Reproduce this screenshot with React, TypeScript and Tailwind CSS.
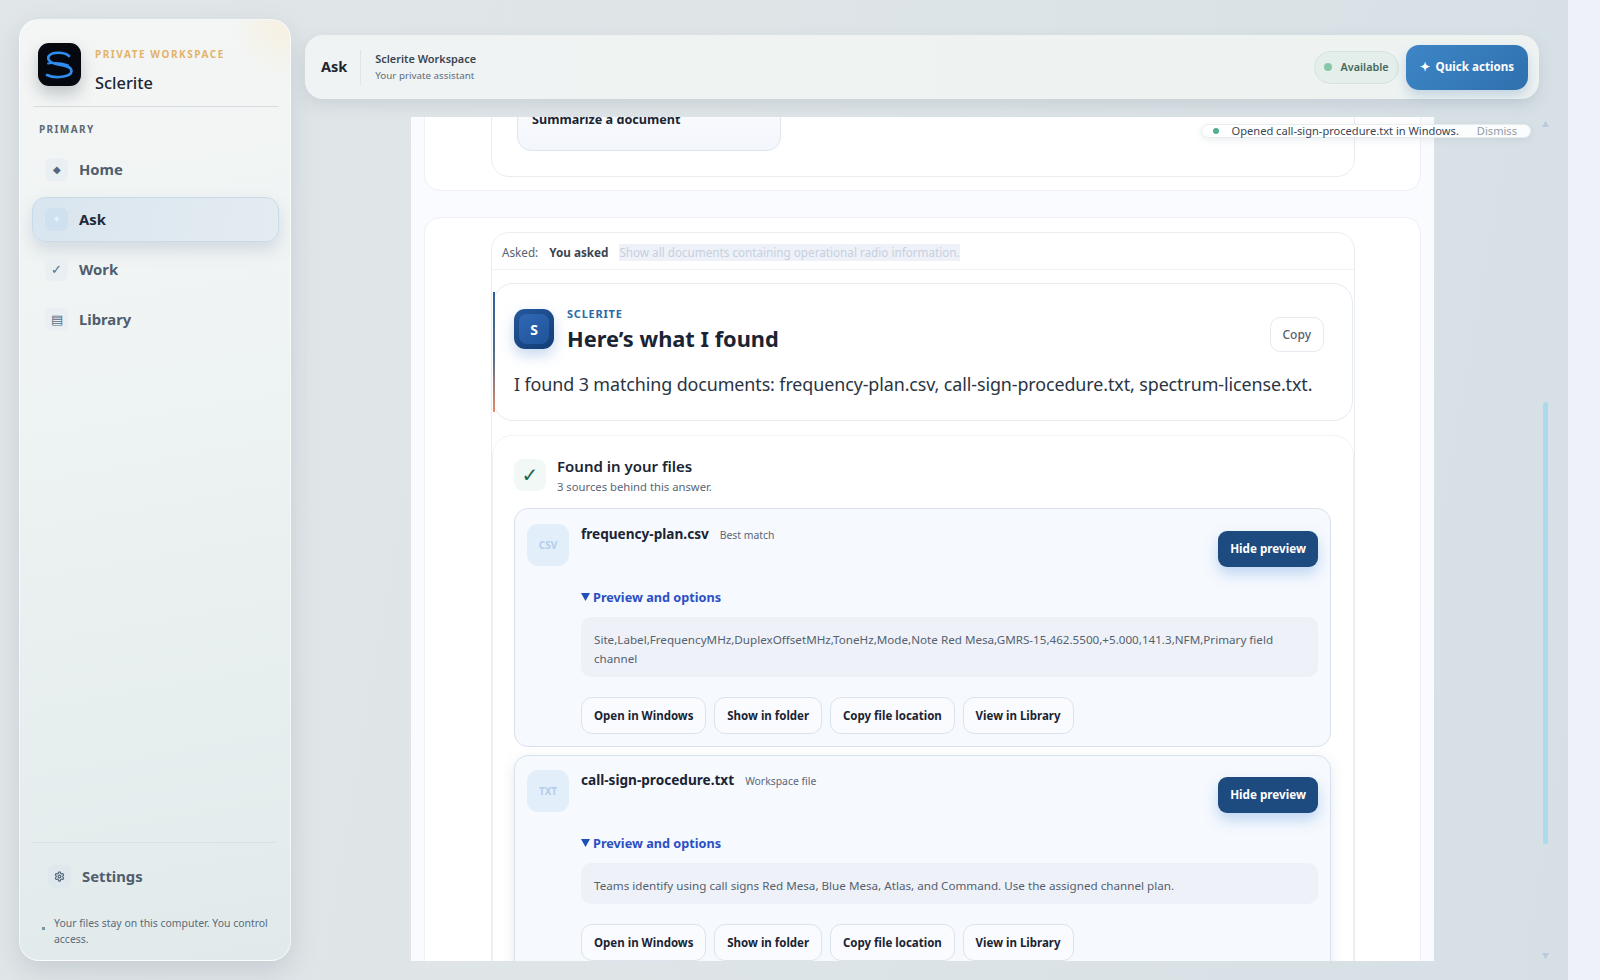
import { Settings as Gear } from 'lucide-react';

const navItems = [
    { label: 'Home', glyph: '◆', glyphSize: 'text-[10px]', active: false },
    { label: 'Ask', glyph: '✦', glyphSize: 'text-[11px]', active: true },
    { label: 'Work', glyph: '✓', glyphSize: 'text-[13px]', active: false },
    { label: 'Library', glyph: '▤', glyphSize: 'text-[13px]', active: false },
];

const fileActions = ['Open in Windows', 'Show in folder', 'Copy file location', 'View in Library'];

function LogoMark() {
    return (
        <div className="flex h-[43px] w-[43px] shrink-0 items-center justify-center rounded-[11px] bg-[#05080f] shadow-[0_8px_16px_rgba(60,70,80,0.28)]">
            <svg viewBox="0 0 43 43" className="h-[43px] w-[43px]" fill="none" stroke="#2f8df0" strokeWidth="2.6" strokeLinecap="round">
                <path d="M31 13C27 9 14 8 10.5 13.5C9 18 14 20.5 20 21.5C27 22.5 33.5 23.5 33.5 28C33.5 34 17 36 9 32" />
                <path d="M10 20.5C16 19.5 24 20 30 22" strokeWidth="1.8" />
            </svg>
        </div>
    );
}

function Sidebar() {
    return (
        <aside className="relative flex w-[272px] shrink-0 flex-col overflow-hidden rounded-[20px] border border-white/60 bg-[linear-gradient(170deg,#f4f6f5_0%,#eef3f3_40%,#e1eaeb_100%)] shadow-[0_10px_26px_rgba(110,125,140,0.22)]">
            <div className="absolute right-0 top-0 h-[60px] w-[60px] bg-[radial-gradient(circle_at_top_right,#f6efdd,transparent_70%)]" />
            <div className="relative ml-[13px] mr-[11px] flex h-[87px] items-start gap-[14px] border-b border-[#d6dde1] pl-[5px] pt-[23px]">
                <LogoMark />
                <div>
                    <div className="mt-[3px] text-[10px] font-bold leading-[16px] tracking-[0.155em] text-[#e2b368]">PRIVATE WORKSPACE</div>
                    <div className="mt-[9px] text-[16.4px] font-medium leading-[24px] text-[#1c2530]">Sclerite</div>
                </div>
            </div>
            <div className="ml-[19px] mt-[15px] text-[10px] font-bold leading-[14px] tracking-[0.14em] text-[#5d6977]">PRIMARY</div>
            <nav className="ml-[12px] mr-[11px] mt-[11px] flex flex-col gap-[5px]">
                {navItems.map((item) => (
                    <div
                        key={item.label}
                        className={
                            item.active
                                ? 'flex h-[45px] items-center gap-[11px] rounded-[13px] border border-[#c8d9e8] bg-[linear-gradient(100deg,#d9e5ef,#e4ecf1)] pl-[12px] shadow-[0_8px_16px_rgba(120,145,170,0.25)]'
                                : 'flex h-[45px] items-center gap-[11px] rounded-[13px] border border-transparent pl-[12px]'
                        }
                    >
                        <span
                            className={
                                item.active
                                    ? `flex h-[23px] w-[23px] items-center justify-center rounded-[6px] bg-[#cfe0ee] text-[#e3f1fb] ${item.glyphSize}`
                                    : `flex h-[23px] w-[23px] items-center justify-center rounded-[6px] bg-[#e9eff2] text-[#55697e] ${item.glyphSize}`
                            }
                        >
                            {item.glyph}
                        </span>
                        <span className={item.active ? 'text-[14.8px] font-bold text-[#1e2a38]' : 'text-[14.8px] font-bold text-[#4f5d6d]'}>{item.label}</span>
                    </div>
                ))}
            </nav>
            <div className="mx-[13px] mt-auto border-t border-[#d8e2e4] pt-[22px]">
                <div className="flex items-center gap-[11px] pl-[15px]">
                    <span className="flex h-[23px] w-[23px] items-center justify-center rounded-[6px] bg-[#dfe8ec] text-[#55687a]">
                        <Gear size={11} strokeWidth={2.6} />
                    </span>
                    <span className="text-[14.8px] font-bold text-[#4f5d6d]">Settings</span>
                </div>
                <div className="mt-[27px] flex gap-[9px] pb-[13px] pl-[9px]">
                    <span className="mt-[12px] h-[3px] w-[3px] shrink-0 bg-[#7b95a3]" />
                    <p className="text-[10.45px] leading-[16px] text-[#5c6a78]">Your files stay on this computer. You control access.</p>
                </div>
            </div>
        </aside>
    );
}

function TopBar() {
    return (
        <header className="mt-[16px] flex h-[64px] shrink-0 items-center rounded-[18px] bg-[linear-gradient(90deg,#eff3f3,#eef3f2)] pl-[16px] pr-[11px] shadow-[0_6px_16px_rgba(120,135,150,0.2)]">
            <span className="text-[14.5px] font-bold text-[#1c2530]">Ask</span>
            <div className="ml-[13px] h-[35px] w-px bg-[#dfe5e7]" />
            <div className="ml-[14px]">
                <div className="text-[10.9px] font-semibold leading-[17px] text-[#3a4552]">Sclerite Workspace</div>
                <div className="text-[9.8px] leading-[17px] text-[#5f6c7a]">Your private assistant</div>
            </div>
            <div className="ml-auto flex items-center gap-[7px]">
                <div className="flex h-[33px] items-center gap-[9px] rounded-full border border-[#d5e2dd] bg-[#e4eeea] pl-[9px] pr-[9px]">
                    <span className="h-[8px] w-[8px] rounded-full bg-[#86c7aa]" />
                    <span className="text-[10.8px] font-semibold text-[#44695c]">Available</span>
                </div>
                <button className="flex h-[45px] items-center gap-[6px] rounded-[13px] bg-[linear-gradient(135deg,#3d86c6,#2f70ae)] px-[14px] text-[11.6px] font-bold text-white shadow-[0_6px_12px_rgba(70,120,170,0.25)]">
                    <span className="text-[12px]">✦</span>
                    Quick actions
                </button>
            </div>
        </header>
    );
}

function FileCard({ ext, name, tag, preview, raised }: { ext: string; name: string; tag: string; preview: string; raised?: boolean }) {
    return (
        <div className={raised ? 'rounded-[14px] border border-[#d8e1ee] bg-[#f6f9fe] px-[12px] pb-[12px] pt-[14px] shadow-[0_4px_14px_rgba(120,135,160,0.18)]' : 'rounded-[14px] border border-[#d8e1ee] bg-[#f6f9fe] px-[12px] pb-[12px] pt-[15px]'}>
            <div className="flex items-start gap-[12px]">
                <div className="flex h-[42px] w-[42px] shrink-0 items-center justify-center rounded-[11px] bg-[#e3eefb] text-[10px] font-bold text-[#b3cdea]">{ext}</div>
                <div className="mt-[1px] flex items-baseline gap-[11px]">
                    <span className="text-[13.6px] font-bold leading-[18px] text-[#1a2433]">{name}</span>
                    <span className="text-[10.4px] text-[#5a6676]">{tag}</span>
                </div>
                <button className="ml-auto mt-[7px] h-[36px] rounded-[9px] bg-[#1d4a7f] px-[12px] text-[11.7px] font-bold text-white shadow-[0_7px_14px_rgba(90,150,220,0.35)]">Hide preview</button>
            </div>
            <div className="ml-[54px] mt-[21px]">
                <div className="flex items-center gap-[3px] text-[12.7px] font-bold leading-[18px] text-[#2b50c4]">
                    <svg viewBox="0 0 9 8" className="h-[8px] w-[9px]" fill="#1f4fb8">
                        <path d="M0 0H9L4.5 8Z" />
                    </svg>
                    Preview and options
                </div>
                <div className="mt-[11px] rounded-[10px] bg-[#eef2f8] px-[13px] pb-[9px] pt-[13px] text-[11.65px] leading-[19px] text-[#556170]">{preview}</div>
                <div className="mt-[20px] flex gap-[7.8px]">
                    {fileActions.map((action) => (
                        <button key={action} className="h-[37px] rounded-[11px] border border-[#dde3ec] bg-[#fafbfe] px-[12px] text-[11.5px] font-bold text-[#1a2433]">
                            {action}
                        </button>
                    ))}
                </div>
            </div>
        </div>
    );
}

function Conversation() {
    return (
        <div className="rounded-[16px] border border-[#edf0f5] bg-white pb-[20px] pl-[66px] pr-[65px] pt-[14px]">
            <div className="rounded-[18px] border border-[#e9edf2] bg-white">
                <div className="flex h-[37px] items-center gap-[11px] border-b border-[#f0f3f6] pl-[10px] pt-[3px] text-[11.7px]">
                    <span className="text-[#566270]">Asked:</span>
                    <span className="font-bold text-[#3a4552]">You asked</span>
                    <span className="bg-[#eef2f8] text-[#c6d0e0]">Show all documents containing operational radio information.</span>
                </div>
                <div className="relative mx-[1px] mt-[13px] rounded-[20px] border border-[#e6ebf0] bg-white pb-[22px] pl-[20px] pr-[20px] pt-[24px]">
                    <div className="absolute bottom-[8px] left-[-1px] top-[8px] w-[2px] bg-[linear-gradient(180deg,#2d5f9e,#55708a_55%,#e88a68)]" />
                    <div className="flex items-start gap-[13px]">
                        <div className="mt-[1px] flex h-[40px] w-[40px] shrink-0 items-center justify-center rounded-[11px] bg-[linear-gradient(145deg,#24589c,#123c75)] shadow-[0_6px_14px_rgba(90,140,210,0.35)]">
                            <div className="flex h-[30px] w-[30px] items-center justify-center rounded-[8px] bg-[linear-gradient(145deg,#3068b4,#1f5399)] text-[14px] font-bold text-white">S</div>
                        </div>
                        <div>
                            <div className="-mt-[1px] text-[11px] font-bold leading-[14px] tracking-[0.07em] text-[#2a6aa5]">SCLERITE</div>
                            <div className="mt-[2px] text-[21.8px] font-bold leading-[31px] text-[#1a2433]">Here’s what I found</div>
                        </div>
                        <button className="ml-auto mr-[8px] mt-[9px] h-[35px] rounded-[10px] border border-[#e6eaf0] bg-white px-[12px] text-[12px] font-medium text-[#535f6e]">Copy</button>
                    </div>
                    <p className="mt-[16px] whitespace-nowrap text-[17.9px] leading-[28px] tracking-[-0.1px] text-[#2a3442]">I found 3 matching documents: frequency-plan.csv, call-sign-procedure.txt, spectrum-license.txt.</p>
                </div>
                <div className="mt-[14px] rounded-[20px] border border-[#f0f3f7] bg-white pb-[20px] pl-[21px] pr-[22px] pt-[21px]">
                    <div className="flex items-start gap-[11px]">
                        <div className="mt-[2px] flex h-[32px] w-[32px] items-center justify-center rounded-[9px] bg-[#f1f8f5] font-['DejaVu_Sans',sans-serif] text-[20px] text-[#1f6a4c]">✓</div>
                        <div className="-mt-[1px]">
                            <div className="text-[15px] font-semibold leading-[20px] text-[#1a2433]">Found in your files</div>
                            <div className="mt-[1px] text-[11.25px] leading-[20px] text-[#5a6676]">3 sources behind this answer.</div>
                        </div>
                    </div>
                    <div className="mt-[11px] flex flex-col gap-[8px]">
                        <FileCard ext="CSV" name="frequency-plan.csv" tag="Best match" preview="Site,Label,FrequencyMHz,DuplexOffsetMHz,ToneHz,Mode,Note Red Mesa,GMRS-15,462.5500,+5.000,141.3,NFM,Primary field channel" />
                        <FileCard raised ext="TXT" name="call-sign-procedure.txt" tag="Workspace file" preview="Teams identify using call signs Red Mesa, Blue Mesa, Atlas, and Command. Use the assigned channel plan." />
                    </div>
                </div>
            </div>
        </div>
    );
}

export default function App() {
    return (
        <div className="flex h-[980px] w-[1600px] overflow-hidden bg-[linear-gradient(100deg,#e1e6e8_0%,#dde4e7_55%,#d5dfe5_100%)] font-['Noto_Sans',sans-serif]">
            <div className="flex min-w-0 flex-1 gap-[14px] py-[19px] pl-[19px] pr-[29px]">
                <Sidebar />
                <main className="relative flex min-w-0 flex-1 flex-col">
                    <TopBar />
                    <div className="ml-[106px] mr-[105px] mt-[18px] flex-1 overflow-hidden bg-[#fafbfe] pl-[13px] pr-[13px]">
                        <div className="-mt-[62px] rounded-[16px] border border-[#edf0f5] bg-white pb-[13px] pl-[66px] pr-[65px] pt-[14px]">
                            <div className="rounded-[18px] border border-[#e9edf2] bg-white px-[25px] pb-[25px] pt-[22px]">
                                <div className="h-[58px] w-[264px] rounded-[14px] border border-[#dfe5ee] bg-[linear-gradient(180deg,#fbfcfe,#f3f6fc)] px-[14px] pt-[16px] text-[12.6px] font-bold leading-[20px] text-[#1a2433]">
                                    Summarize a document
                                </div>
                            </div>
                        </div>
                        <div className="mt-[26px]">
                            <Conversation />
                        </div>
                    </div>
                    <div className="absolute right-[8px] top-[105px] flex h-[14px] items-center rounded-full border border-[#e8edf0] bg-white/90 pl-[11px] pr-[13px] text-[11.1px] text-[#3a4552] shadow-[0_2px_6px_rgba(120,135,150,0.15)]">
                        <span className="h-[6px] w-[6px] rounded-full bg-[#4fb08a]" />
                        <span className="ml-[13px]">Opened call-sign-procedure.txt in Windows.</span>
                        <span className="ml-[18px] text-[#949ea9]">Dismiss</span>
                    </div>
                </main>
            </div>
            <div className="relative w-[32px] shrink-0 bg-[#eef2f8]">
                <div className="absolute left-[-25px] top-[402px] h-[442px] w-[5px] rounded-full bg-[#a9dbec]" />
                <svg viewBox="0 0 7 6" className="absolute left-[-26px] top-[121px] h-[6px] w-[7px]" fill="#b8cbdc">
                    <path d="M3.5 0L7 6H0Z" />
                </svg>
                <svg viewBox="0 0 7 6" className="absolute left-[-26px] top-[953px] h-[6px] w-[7px]" fill="#b8cbdc">
                    <path d="M0 0H7L3.5 6Z" />
                </svg>
            </div>
        </div>
    );
}
